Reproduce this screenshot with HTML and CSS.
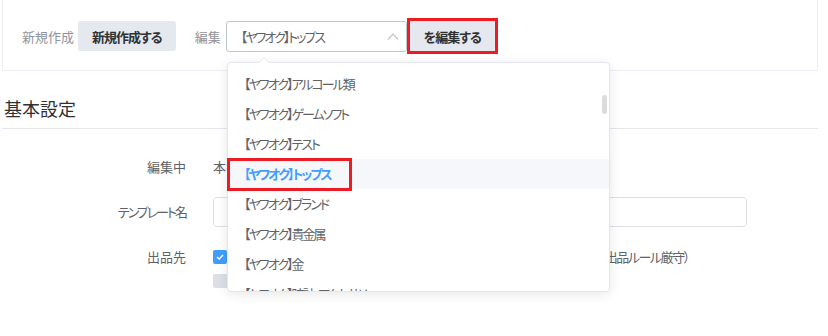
FILE: index.html
```html
<!DOCTYPE html>
<html lang="ja">
<head>
  <meta charset="UTF-8" />
  <meta name="viewport" content="width=device-width, initial-scale=1" />
  <title>テンプレート編集</title>
  <link rel="stylesheet" href="styles.css">
</head>
<body>

<div class="page">
  <div class="toolbar">
    <span class="tool-label">新規作成</span>
    <button class="btn">新規作成する</button>
    <span class="tool-label edit-label">編集</span>
    <div class="select">
      <span class="select-value">【ヤフオク】トップス</span>
      <svg class="chevron" width="12" height="7" viewBox="0 0 12 7">
        <path d="M1 6.5 L6 1.2 L11 6.5" fill="none" stroke="#c0c4cc" stroke-width="1.2"/>
      </svg>
    </div>
    <button class="btn btn-edit">を編集する</button>
  </div>

  <h2 class="section-title">基本設定</h2>

  <div class="form">
    <div class="form-row">
      <div class="form-label">編集中</div>
      <div class="form-content">本番用テンプレート</div>
    </div>
    <div class="form-row">
      <div class="form-label kana">テンプレート名</div>
      <div class="form-content">
        <input class="text-input" type="text">
      </div>
    </div>
    <div class="form-row form-row-top">
      <div class="form-label">出品先</div>
      <div class="form-content">
        <div class="check-line">
          <span class="checkbox checked">
            <svg width="8" height="6" viewBox="0 0 8 6"><path d="M1 3 L3.2 5 L7 1" fill="none" stroke="#fff" stroke-width="1.5"/></svg>
          </span>
          <span class="check-text">ヤフオク！オークション　ストア出品（自動再出品あり・即決設定あり・ヤフオク出品ルール厳守）</span>
        </div>
        <div class="check-line">
          <span class="checkbox disabled"></span>
        </div>
      </div>
    </div>
  </div>

  <div class="dropdown">
    <ul class="dropdown-list">
      <li>【ヤフオク】アルコール類</li>
      <li>【ヤフオク】ゲームソフト</li>
      <li>【ヤフオク】テスト</li>
      <li class="selected">【ヤフオク】トップス</li>
      <li>【ヤフオク】ブランド</li>
      <li>【ヤフオク】貴金属</li>
      <li>【ヤフオク】金</li>
      <li>【ヤフオク】時計・アクセサリー</li>
    </ul>
    <div class="scroll-thumb"></div>
    <div class="mark"></div>
  </div>
</div>

</body>
</html>
```

FILE: styles.css
```css
body {
  margin: 0;
  background: #fff;
  font-family: "Noto Sans CJK JP", "Noto Sans", sans-serif;
  font-feature-settings: "palt";
  font-size: 13px;
  color: #606266;
}
.page {
  position: relative;
  margin-left: 2px;
  width: 816px;
}
.kana {
  letter-spacing: -2px;
}
.toolbar {
  display: flex;
  align-items: center;
  height: 71px;
  padding: 2px 0 0 19px;
  box-sizing: border-box;
  border: 1px solid #ebeef5;
  border-top: none;
}
.tool-label {
  color: #909399;
  margin-right: 4px;
}
.edit-label {
  margin-left: 19px;
  margin-right: 5px;
}
.btn {
  height: 30px;
  padding: 0 14px;
  border: none;
  border-radius: 3px;
  background: #e5e8ef;
  color: #303133;
  font-family: inherit;
  font-feature-settings: "palt";
  font-size: 13px;
  font-weight: bold;
  letter-spacing: -1px;
}
.btn-edit {
  margin-left: 3px;
  padding: 0 14px;
  outline: 3px solid #ed1c24;
  border-radius: 0;
}
.select {
  display: flex;
  align-items: center;
  justify-content: space-between;
  width: 181px;
  height: 31px;
  padding: 0 7px 0 14px;
  box-sizing: border-box;
  border: 1px solid #c0c4cc;
  border-radius: 3px;
  color: #606266;
}
.select-value {
  letter-spacing: -2px;
}
.section-title {
  margin: 0;
  display: flex;
  align-items: flex-end;
  height: 58px;
  padding: 0 0 8px 2px;
  box-sizing: border-box;
  border-bottom: 1px solid #e4e7ed;
  font-size: 18px;
  font-weight: normal;
  line-height: 24px;
  color: #303133;
}
.form {
  padding-top: 23px;
}
.form-row {
  display: flex;
  align-items: center;
  min-height: 30px;
  margin-bottom: 15px;
}
.form-row-top {
  align-items: flex-start;
}
.form-label {
  width: 184px;
  text-align: right;
  line-height: 30px;
  color: #606266;
}
.form-content {
  margin-left: 27px;
  line-height: 30px;
}
.text-input {
  display: block;
  width: 534px;
  height: 30px;
  box-sizing: border-box;
  border: 1px solid #dcdfe6;
  border-radius: 4px;
}
.check-line {
  display: flex;
  align-items: center;
  height: 30px;
}
.check-line + .check-line {
  height: 14px;
  margin-top: 2px;
}
.checkbox {
  display: flex;
  align-items: center;
  justify-content: center;
  width: 14px;
  height: 14px;
  border-radius: 2px;
  box-sizing: border-box;
}
.checkbox.checked {
  background: #409eff;
}
.checkbox.disabled {
  width: 30px;
  background: #dcdfe6;
}
.check-text {
  margin-left: 6px;
  letter-spacing: -1.45px;
  white-space: nowrap;
}
.dropdown {
  position: absolute;
  left: 225px;
  top: 62px;
  width: 383px;
  height: 230px;
  box-sizing: border-box;
  background: #fff;
  border: 1px solid #e4e7ed;
  border-radius: 4px;
  box-shadow: 0 2px 12px rgba(0, 0, 0, 0.1);
}
.dropdown::before,
.dropdown::after {
  content: "";
  position: absolute;
  left: 30px;
  top: -12px;
  border: 6px solid transparent;
  border-bottom-color: #e4e7ed;
}
.dropdown::after {
  top: -11px;
  border-bottom-color: #fff;
}
.dropdown-list {
  list-style: none;
  margin: 0;
  padding: 6px 0 0;
  height: 228px;
  box-sizing: border-box;
  overflow: hidden;
}
.dropdown-list li {
  height: 30px;
  line-height: 30px;
  padding: 0 16px;
  color: #606266;
  white-space: nowrap;
  letter-spacing: -2px;
}
.dropdown-list li.selected {
  background: #f5f7fa;
  color: #409eff;
  font-weight: bold;
}
.scroll-thumb {
  position: absolute;
  right: 2px;
  top: 32px;
  width: 5px;
  height: 19px;
  border-radius: 3px;
  background: #dcdcdc;
}
.mark {
  position: absolute;
  left: -1px;
  top: 95px;
  width: 125px;
  height: 33px;
  box-sizing: border-box;
  border: 3px solid #ed1c24;
}
```
